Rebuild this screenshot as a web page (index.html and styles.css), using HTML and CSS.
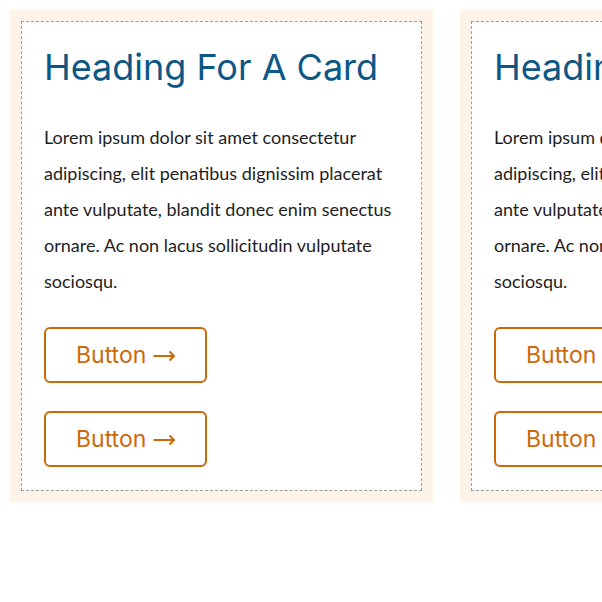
FILE: index.html
```html
<!DOCTYPE html>
<html>
<head>
<meta charset="utf-8">
<link rel="stylesheet" href="styles.css">
</head>
<body>
<div class="cards">
  <div class="card">
    <div class="card-inner">
      <h2 class="card-title">Heading For A Card</h2>
      <p class="card-text">Lorem ipsum dolor sit amet consectetur adipiscing, elit penatibus dignissim placerat ante vulputate, blandit donec enim senectus ornare. Ac non lacus sollicitudin vulputate sociosqu.</p>
      <div class="actions">
        <a class="btn" href="#">Button <svg class="arrow" width="22" height="14" viewBox="0 0 22 14" aria-hidden="true"><path d="M0.5 6H21M16.5 1.5L21 6L16.5 10.5" fill="none" stroke="currentColor" stroke-width="2"/></svg></a>
        <a class="btn" href="#">Button <svg class="arrow" width="22" height="14" viewBox="0 0 22 14" aria-hidden="true"><path d="M0.5 6H21M16.5 1.5L21 6L16.5 10.5" fill="none" stroke="currentColor" stroke-width="2"/></svg></a>
      </div>
    </div>
  </div>
  <div class="card">
    <div class="card-inner">
      <h2 class="card-title">Heading For A Card</h2>
      <p class="card-text">Lorem ipsum dolor sit amet consectetur adipiscing, elit penatibus dignissim placerat ante vulputate, blandit donec enim senectus ornare. Ac non lacus sollicitudin vulputate sociosqu.</p>
      <div class="actions">
        <a class="btn" href="#">Button <svg class="arrow" width="22" height="14" viewBox="0 0 22 14" aria-hidden="true"><path d="M0.5 6H21M16.5 1.5L21 6L16.5 10.5" fill="none" stroke="currentColor" stroke-width="2"/></svg></a>
        <a class="btn" href="#">Button <svg class="arrow" width="22" height="14" viewBox="0 0 22 14" aria-hidden="true"><path d="M0.5 6H21M16.5 1.5L21 6L16.5 10.5" fill="none" stroke="currentColor" stroke-width="2"/></svg></a>
      </div>
    </div>
  </div>
</div>
</body>
</html>
```
FILE: styles.css
```css
html, body {
  margin: 0;
  padding: 0;
  background: #ffffff;
  overflow: hidden;
}
body {
  padding: 10px;
}
.cards {
  display: flex;
  gap: 27px;
  width: max-content;
}
.card {
  width: 423px;
  box-sizing: border-box;
  background: #fdf3e8;
  padding: 11px;
}
.card-inner {
  border: 1px dashed #a09a96;
  background: #ffffff;
  padding: 23px 22px 23px 22px;
}
.card-title {
  margin: 0;
  font-family: Inter, "Noto Sans", sans-serif;
  font-weight: 400;
  font-size: 36px;
  line-height: 44px;
  color: #0b5786;
}
.card-text {
  margin: 30px 0 0;
  font-family: Lato, "Open Sans", sans-serif;
  font-size: 18px;
  line-height: 36px;
  color: #1e1e1e;
}
.actions {
  margin-top: 28px;
  display: flex;
  flex-direction: column;
  align-items: flex-start;
  gap: 28px;
}
.btn {
  display: inline-block;
  border: 2px solid #cc6a0a;
  border-radius: 6px;
  padding: 12px 30px;
  font-family: Inter, "Noto Sans", sans-serif;
  font-size: 23px;
  line-height: 28px;
  color: #cc6a0a;
  text-decoration: none;
}
.arrow {
  vertical-align: middle;
}
```
